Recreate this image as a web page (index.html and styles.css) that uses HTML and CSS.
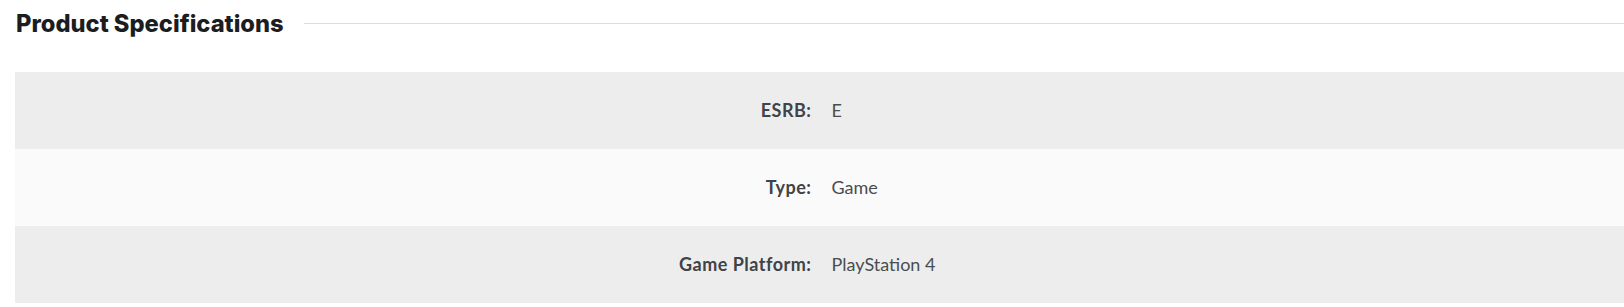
FILE: index.html
```html
<!DOCTYPE html>
<html lang="en">
<head>
<meta charset="utf-8">
<title>Product Specifications</title>
<link rel="stylesheet" href="styles.css">
</head>
<body>
<section class="specs">
  <div class="specs-header">
    <h2 class="specs-title">Product Specifications</h2>
    <span class="specs-rule"></span>
  </div>
  <div class="specs-table">
    <div class="spec-row odd">
      <div class="spec-label">ESRB:</div>
      <div class="spec-value">E</div>
    </div>
    <div class="spec-row even">
      <div class="spec-label">Type:</div>
      <div class="spec-value">Game</div>
    </div>
    <div class="spec-row odd">
      <div class="spec-label">Game Platform:</div>
      <div class="spec-value">PlayStation 4</div>
    </div>
  </div>
</section>
</body>
</html>
```
FILE: styles.css
```css
html, body {
  margin: 0;
  padding: 0;
  background: #ffffff;
  overflow: hidden;
}

.specs {
  padding-left: 15px;
  width: 1609px;
}

.specs-header {
  display: flex;
  align-items: center;
  height: 46px;
  gap: 20px;
}

.specs-title {
  margin: 0;
  font-family: Inter, "Liberation Sans", sans-serif;
  font-weight: 800;
  font-size: 23.7px;
  color: #1b1d1f;
  white-space: nowrap;
  padding-left: 1px;
}

.specs-rule {
  flex: 1;
  height: 1px;
  background: #dcdcdc;
}

.specs-table {
  margin-top: 26px;
}

.spec-row {
  display: grid;
  grid-template-columns: 1fr 1fr;
  height: 77px;
  box-sizing: border-box;
  padding-bottom: 2px;
  align-items: center;
  font-family: Lato, "Liberation Sans", sans-serif;
  font-size: 18px;
}

.spec-row.odd {
  background: #ededed;
}

.spec-row.even {
  background: #fafafa;
}

.spec-label {
  text-align: right;
  font-weight: 700;
  color: #404347;
  letter-spacing: 0.5px;
  padding-right: 8px;
}

.spec-value {
  color: #4a4d50;
  padding-left: 12px;
}
```
